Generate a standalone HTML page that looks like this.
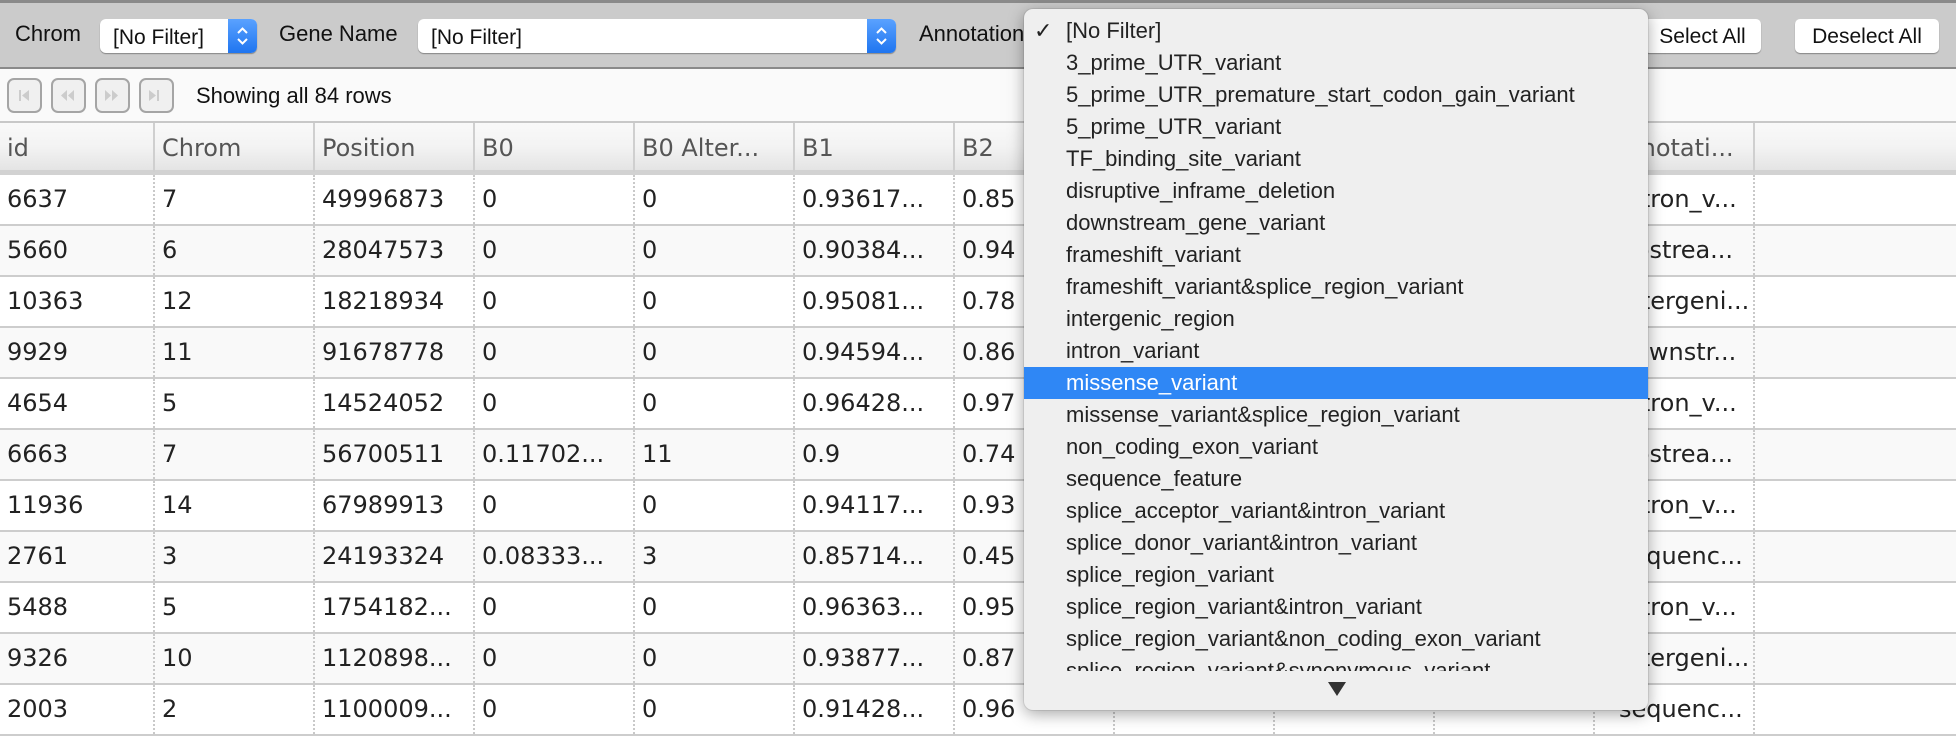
<!DOCTYPE html>
<html><head><meta charset="utf-8"><style>
*{box-sizing:border-box;margin:0;padding:0}
html,body{height:716px}
body{width:1956px;height:716px;overflow:hidden;background:#fff;position:relative;font-family:"Liberation Sans",Arial,sans-serif}
.tb{position:absolute;left:0;top:0;width:1956px;height:69px;background:#cbcbcb;border-top:3px solid #8a8a8a;border-bottom:2px solid #8a8a8a}
.lbl{position:absolute;top:18px;font-size:22px;color:#111}
.sel{position:absolute;top:16px;height:34px;background:#fff;border-radius:6px;box-shadow:0 1px 1px rgba(0,0,0,.35);font-size:21px;padding:7px 0 0 13px;color:#111}
.sel .ar{position:absolute;right:0;top:0;width:29px;height:34px;background:linear-gradient(#5aa2ff,#1f75f0);border-radius:0 6px 6px 0}
.btn{position:absolute;top:16px;height:34px;background:#fff;border-radius:5px;box-shadow:0 1px 1px rgba(0,0,0,.35);font-size:21px;padding:6px 0 0;text-align:center;color:#111}
.pg{position:absolute;left:0;top:69px;width:1956px;height:54px;background:#fafafa;border-bottom:2px solid #c8c8c8}
.pb{position:absolute;top:9px;width:35px;height:35px;border:2px solid #a5a5a5;border-radius:7px;background:#f0f0f0}
.row{position:absolute;left:0;width:1956px;height:51px;border-bottom:2px solid #cdcdcd;font-family:"DejaVu Sans",Verdana,sans-serif;font-size:24px;color:#222}
.row div{position:absolute;top:0;height:49px;padding:10px 0 0 7px;white-space:nowrap;overflow:hidden;border-right:2px dotted #c9c9c9}
.hd{top:123px;height:52px;background:linear-gradient(#f9f9f9,#f3f3f3 50%,#e4e4e4);border-bottom:5px solid #d2d2d2;color:#555}
.hd div{border-right:2px solid #cfcfcf;padding-top:11px}
.alt{background:#f9f9f9}
.dd{position:absolute;left:1024px;top:9px;width:624px;height:701px;background:#efefef;border-radius:9px;box-shadow:0 4px 16px rgba(0,0,0,.35),0 0 0 1px rgba(0,0,0,.08);overflow:hidden}
.it{position:absolute;left:0;width:624px;height:32px;font-size:22px;color:#222;padding:3px 0 0 42px;white-space:nowrap}
.hl{background:#2f87f5;color:#fff}
</style></head><body>
<div class="tb">
<div class="lbl" style="left:15px">Chrom</div>
<div class="sel" style="left:100px;width:157px">[No Filter]<div class="ar"><svg width="29" height="34"><path d="M10 14 L14.5 9.5 L19 14 M10 20 L14.5 24.5 L19 20" stroke="#fff" stroke-width="2" fill="none"/></svg></div></div>
<div class="lbl" style="left:279px">Gene Name</div>
<div class="sel" style="left:418px;width:478px">[No Filter]<div class="ar"><svg width="29" height="34"><path d="M10 14 L14.5 9.5 L19 14 M10 20 L14.5 24.5 L19 20" stroke="#fff" stroke-width="2" fill="none"/></svg></div></div>
<div class="lbl" style="left:919px">Annotation</div>
<div class="btn" style="left:1644px;width:117px">Select All</div>
<div class="btn" style="left:1795px;width:144px">Deselect All</div>
</div>
<div class="pg">
<div class="pb" style="left:7px"></div><div class="pb" style="left:51px"></div><div class="pb" style="left:95px"></div><div class="pb" style="left:139px"></div>
<svg style="position:absolute;left:7px;top:9px" width="170" height="35"><g fill="#ccc"><rect x="12" y="12" width="2" height="11"/><path d="M22 12 L15 17.5 L22 23Z"/><path d="M60 12 L54 17.5 L60 23Z M67 12 L61 17.5 L67 23Z"/><path d="M98 12 L104 17.5 L98 23Z M105 12 L111 17.5 L105 23Z"/><path d="M142 12 L149 17.5 L142 23Z"/><rect x="150" y="12" width="2" height="11"/></g></svg>
<div style="position:absolute;left:196px;top:14px;font-size:22px;color:#111">Showing all 84 rows</div>
</div>
<div class="row hd"><div style="left:0;width:155px">id</div><div style="left:155px;width:160px">Chrom</div><div style="left:315px;width:160px">Position</div><div style="left:475px;width:160px">B0</div><div style="left:635px;width:160px">B0 Alter...</div><div style="left:795px;width:160px">B1</div><div style="left:955px;width:160px">B2</div><div style="left:1115px;width:160px">B3</div><div style="left:1275px;width:160px">B4</div><div style="left:1435px;width:160px">B5</div><div style="left:1595px;width:160px;padding-left:14px">Annotati...</div></div>
<div id="rows"></div>
<script>
var d=[["6637","7","49996873","0","0","0.93617...","0.85","intron_v..."],["5660","6","28047573","0","0","0.90384...","0.94","upstrea..."],["10363","12","18218934","0","0","0.95081...","0.78","intergeni..."],["9929","11","91678778","0","0","0.94594...","0.86","downstr..."],["4654","5","14524052","0","0","0.96428...","0.97","intron_v..."],["6663","7","56700511","0.11702...","11","0.9","0.74","upstrea..."],["11936","14","67989913","0","0","0.94117...","0.93","intron_v..."],["2761","3","24193324","0.08333...","3","0.85714...","0.45","sequenc..."],["5488","5","1754182...","0","0","0.96363...","0.95","intron_v..."],["9326","10","1120898...","0","0","0.93877...","0.87","intergeni..."],["2003","2","1100009...","0","0","0.91428...","0.96","sequenc..."]];
var h="";for(var i=0;i<d.length;i++){var r=d[i],t=175+i*51;h+='<div class="row'+(i%2?' alt':'')+'" style="top:'+t+'px">';var x=[0,155,315,475,635,795,955,1115,1275,1435];for(var j=0;j<7;j++)h+='<div style="left:'+x[j]+'px;width:'+(j?160:155)+'px">'+r[j]+'</div>';h+='<div style="left:1115px;width:160px"></div><div style="left:1275px;width:160px"></div><div style="left:1435px;width:160px"></div><div style="left:1595px;width:160px;padding-left:24px">'+r[7]+'</div></div>';}
document.getElementById("rows").innerHTML=h;
</script>
<div class="dd">
<div class="it" style="top:6px"><span style="position:absolute;left:10px">✓</span>[No Filter]</div>
<div class="it" style="top:38px">3_prime_UTR_variant</div>
<div class="it" style="top:70px">5_prime_UTR_premature_start_codon_gain_variant</div>
<div class="it" style="top:102px">5_prime_UTR_variant</div>
<div class="it" style="top:134px">TF_binding_site_variant</div>
<div class="it" style="top:166px">disruptive_inframe_deletion</div>
<div class="it" style="top:198px">downstream_gene_variant</div>
<div class="it" style="top:230px">frameshift_variant</div>
<div class="it" style="top:262px">frameshift_variant&amp;splice_region_variant</div>
<div class="it" style="top:294px">intergenic_region</div>
<div class="it" style="top:326px">intron_variant</div>
<div class="it hl" style="top:358px">missense_variant</div>
<div class="it" style="top:390px">missense_variant&amp;splice_region_variant</div>
<div class="it" style="top:422px">non_coding_exon_variant</div>
<div class="it" style="top:454px">sequence_feature</div>
<div class="it" style="top:486px">splice_acceptor_variant&amp;intron_variant</div>
<div class="it" style="top:518px">splice_donor_variant&amp;intron_variant</div>
<div class="it" style="top:550px">splice_region_variant</div>
<div class="it" style="top:582px">splice_region_variant&amp;intron_variant</div>
<div class="it" style="top:614px">splice_region_variant&amp;non_coding_exon_variant</div>
<div style="position:absolute;left:0;top:646px;width:624px;height:16px;overflow:hidden"><div class="it" style="top:0">splice_region_variant&amp;synonymous_variant</div></div>
<svg style="position:absolute;left:303px;top:672px" width="20" height="16"><path d="M1 1 L19 1 L10 15Z" fill="#333"/></svg>
</div>
</body></html>
